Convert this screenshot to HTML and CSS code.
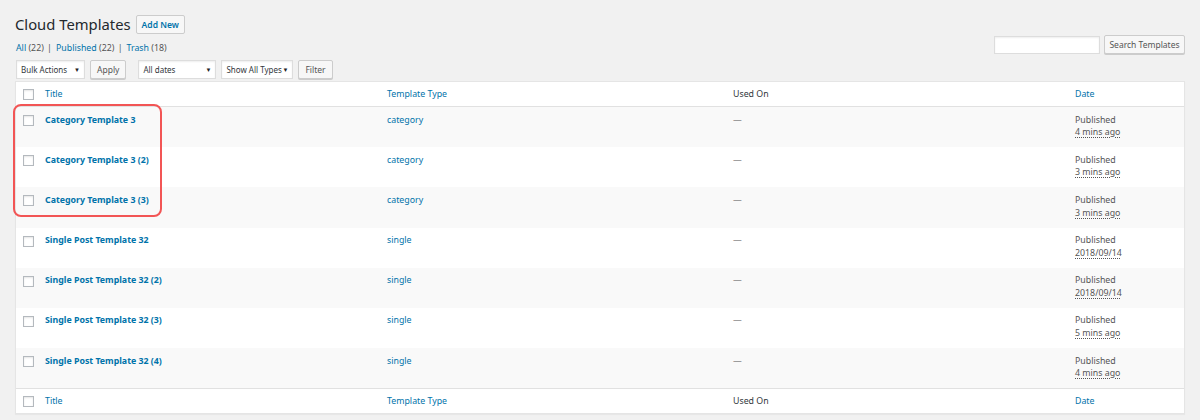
FILE: index.html
```html
<!DOCTYPE html>
<html>
<head>
<meta charset="utf-8">
<link rel="stylesheet" href="styles.css">
</head>
<body>
<div class="wrap">
  <div class="head">
    <h1 class="title">Cloud Templates</h1>
    <a class="add-new">Add New</a>
  </div>
  <div class="bar">
    <div class="left">
      <ul class="subsub">
        <li><a>All</a> <span class="count">(22)</span> <span class="sep">|</span></li>
        <li><a>Published</a> <span class="count">(22)</span> <span class="sep">|</span></li>
        <li><a>Trash</a> <span class="count">(18)</span></li>
      </ul>
      <div class="filters">
        <div class="select w-bulk">Bulk Actions<span class="arr">▼</span></div>
        <div class="btn">Apply</div>
        <div class="select w-dates">All dates<span class="arr">▼</span></div>
        <div class="select w-types">Show All Types<span class="arr">▼</span></div>
        <div class="btn">Filter</div>
      </div>
    </div>
    <div class="search">
      <div class="input"></div>
      <div class="btn">Search Templates</div>
    </div>
  </div>

  <div class="table">
    <div class="row thead">
      <div class="cb"><span class="box"></span></div>
      <div class="c"><a>Title</a></div>
      <div class="c"><a>Template Type</a></div>
      <div class="c plain">Used On</div>
      <div class="c"><a>Date</a></div>
    </div>

    <div class="row alt">
      <div class="cb"><span class="box"></span></div>
      <div class="c"><a class="name">Category Template 3</a></div>
      <div class="c"><a>category</a></div>
      <div class="c dash">—</div>
      <div class="c date">Published<br><abbr>4 mins ago</abbr></div>
    </div>
    <div class="row">
      <div class="cb"><span class="box"></span></div>
      <div class="c"><a class="name">Category Template 3 (2)</a></div>
      <div class="c"><a>category</a></div>
      <div class="c dash">—</div>
      <div class="c date">Published<br><abbr>3 mins ago</abbr></div>
    </div>
    <div class="row alt">
      <div class="cb"><span class="box"></span></div>
      <div class="c"><a class="name">Category Template 3 (3)</a></div>
      <div class="c"><a>category</a></div>
      <div class="c dash">—</div>
      <div class="c date">Published<br><abbr>3 mins ago</abbr></div>
    </div>
    <div class="row">
      <div class="cb"><span class="box"></span></div>
      <div class="c"><a class="name">Single Post Template 32</a></div>
      <div class="c"><a>single</a></div>
      <div class="c dash">—</div>
      <div class="c date">Published<br><abbr>2018/09/14</abbr></div>
    </div>
    <div class="row alt">
      <div class="cb"><span class="box"></span></div>
      <div class="c"><a class="name">Single Post Template 32 (2)</a></div>
      <div class="c"><a>single</a></div>
      <div class="c dash">—</div>
      <div class="c date">Published<br><abbr>2018/09/14</abbr></div>
    </div>
    <div class="row">
      <div class="cb"><span class="box"></span></div>
      <div class="c"><a class="name">Single Post Template 32 (3)</a></div>
      <div class="c"><a>single</a></div>
      <div class="c dash">—</div>
      <div class="c date">Published<br><abbr>5 mins ago</abbr></div>
    </div>
    <div class="row alt">
      <div class="cb"><span class="box"></span></div>
      <div class="c"><a class="name">Single Post Template 32 (4)</a></div>
      <div class="c"><a>single</a></div>
      <div class="c dash">—</div>
      <div class="c date">Published<br><abbr>4 mins ago</abbr></div>
    </div>

    <div class="row tfoot">
      <div class="cb"><span class="box"></span></div>
      <div class="c"><a>Title</a></div>
      <div class="c"><a>Template Type</a></div>
      <div class="c plain">Used On</div>
      <div class="c"><a>Date</a></div>
    </div>

    <div class="highlight"></div>
  </div>
</div>
</body>
</html>
```

FILE: styles.css
```css
* { box-sizing: border-box; }
html, body { margin: 0; padding: 0; }
body {
  background: #f1f1f1;
  font-family: "Noto Sans", "Open Sans", sans-serif;
  font-size: 8.8px;
  color: #444;
  width: 1200px;
  height: 420px;
  overflow: hidden;
}
a { color: #0073aa; text-decoration: none; }

.wrap { padding: 13px 15px 0 15px; }

.head { display: flex; align-items: center; gap: 5px; height: 22px; }
.title {
  margin: 0;
  font-size: 14.8px;
  font-weight: 400;
  color: #23282d;
  line-height: 22px;
}
.add-new {
  display: inline-flex;
  align-items: center;
  height: 19px;
  padding: 0 5px;
  border: 1px solid #ccc;
  border-radius: 2px;
  background: #f7f7f7;
  font-weight: 600;
  font-size: 8.5px;
}

.bar { display: flex; justify-content: space-between; align-items: flex-start; }
.left { display: flex; flex-direction: column; }
.subsub {
  list-style: none;
  margin: 6px 0 0 1px;
  padding: 0;
  display: flex;
  gap: 3px;
  height: 14px;
  align-items: center;
}
.subsub li { white-space: nowrap; }
.subsub .count { color: #555; }
.subsub .sep { color: #555; margin: 0 1px; }

.filters { display: flex; gap: 5px; margin-top: 5px; margin-left: 1px; }
.select {
  height: 19px;
  background: #fff;
  border: 1px solid #ddd;
  box-shadow: inset 0 1px 2px rgba(0,0,0,.07);
  display: flex;
  align-items: center;
  justify-content: space-between;
  padding: 0 4px 0 4px;
  color: #32373c;
  font-size: 8px;
}
.select .arr { font-size: 6px; color: #222; }
.w-bulk { width: 69px; }
.w-dates { width: 78px; margin-left: 7px; }
.w-types { width: 72px; }
.btn {
  height: 19px;
  display: flex;
  align-items: center;
  padding: 0 6px;
  background: #f7f7f7;
  border: 1px solid #ccc;
  border-radius: 2px;
  box-shadow: 0 1px 0 #ccc;
  color: #555;
  font-size: 8.5px;
}

.search { display: flex; gap: 4px; margin-top: 0; }
.search .input {
  width: 106px;
  height: 18px;
  margin-top: 1px;
  background: #fff;
  border: 1px solid #ddd;
  box-shadow: inset 0 1px 2px rgba(0,0,0,.07);
}
.search .btn { width: 81px; justify-content: center; padding: 0; }

.table {
  position: relative;
  margin-top: 2px;
  background: #fff;
  border: 1px solid #e5e5e5;
  box-shadow: 0 1px 1px rgba(0,0,0,.04);
  width: 1170px;
}
.row {
  display: grid;
  grid-template-columns: 29px 342px 346px 342px 1fr;
  height: 40.2px;
  align-items: start;
}
.row.alt { background: #f9f9f9; }
.thead, .tfoot { height: 25px; align-items: center; }
.thead { border-bottom: 1px solid #e1e1e1; }
.tfoot { border-top: 1px solid #e1e1e1; }
.cb { padding-left: 7px; display: flex; }
.row:not(.thead):not(.tfoot) .cb { padding-top: 8px; }
.row:not(.thead):not(.tfoot) .c { padding-top: 6.5px; }
.box {
  width: 11px;
  height: 11px;
  border: 1px solid #b4b9be;
  background: #fff;
  box-shadow: inset 0 1px 2px rgba(0,0,0,.1);
}
.c { line-height: 12.8px; white-space: nowrap; }
.c.plain { color: #32373c; }
.name { font-weight: 700; }
.dash { color: #555; }
.date { color: #555; }
.date abbr { text-decoration: underline dotted; text-underline-offset: 2px; }

.highlight {
  position: absolute;
  left: -3px;
  top: 22px;
  width: 149px;
  height: 113px;
  border: 2.5px solid #f25555;
  border-radius: 8px;
  pointer-events: none;
}
```
